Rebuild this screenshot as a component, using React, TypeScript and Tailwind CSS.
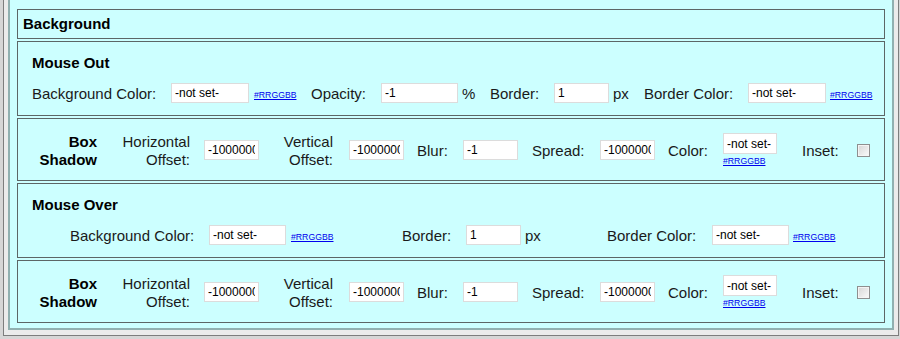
const font = "font-['Liberation_Sans',Arial,sans-serif]";

const Field = ({ value, w }: { value: string; w: string }) => (
  <input
    readOnly
    value={value}
    className={`${w} h-[20px] shrink-0 border border-[#dcdcdc] bg-white px-[3px] text-[12px] text-black outline-none ${font}`}
  />
);

const Hex = ({ pad }: { pad: string }) => (
  <span className={`${pad} mt-[4px] shrink-0 text-[8.7px] leading-none text-[#0000ee] underline`}>#RRGGBB</span>
);

const Panel = ({ children, h }: { children: React.ReactNode; h: string }) => (
  <div className={`${h} border border-[#5c6666]`}>{children}</div>
);

const ShadowRow = () => (
  <Panel h="h-[63px]">
    <div className="flex items-center pt-[12px] text-[15px] leading-[18px] text-[#1a1a1a]">
      <div className="w-[79px] shrink-0 pt-[2px] text-right font-bold text-black">
        Box
        <br />
        Shadow
      </div>
      <div className="w-[93px] shrink-0 pt-[2px] text-right">
        Horizontal
        <br />
        Offset:
      </div>
      <div className="ml-[14px]">
        <Field value="-1000000" w="w-[55px]" />
      </div>
      <div className="w-[74px] shrink-0 pt-[2px] text-right">
        Vertical
        <br />
        Offset:
      </div>
      <div className="ml-[16px]">
        <Field value="-1000000" w="w-[55px]" />
      </div>
      <span className="w-[59px] shrink-0 pl-[13px] pt-[2px]">Blur:</span>
      <Field value="-1" w="w-[55px]" />
      <span className="w-[82px] shrink-0 pl-[14px] pt-[2px]">Spread:</span>
      <Field value="-1000000" w="w-[55px]" />
      <span className="w-[68px] shrink-0 pl-[13px] pt-[2px]">Color:</span>
      <div className="flex w-[55px] shrink-0 flex-col">
        <input
          readOnly
          value="-not set-"
          className={`h-[21px] w-[54px] border border-[#dcdcdc] bg-white px-[3px] text-[12px] text-black outline-none ${font}`}
        />
        <span className="mt-[2px] text-[8.7px] leading-[11px] text-[#0000ee] underline">#RRGGBB</span>
      </div>
      <span className="w-[79px] shrink-0 pl-[24px] pt-[2px]">Inset:</span>
      <span className="h-[13px] w-[13px] shrink-0 border border-[#8e8f8f] bg-gradient-to-br from-[#d6d6d6] to-[#fafafa] shadow-[inset_0_0_0_1px_#f4f4f4]" />
    </div>
  </Panel>
);

export default function App() {
  return (
    <div className={`h-[339px] w-[900px] overflow-hidden bg-[#d6d6d6] ${font}`}>
      <div className="ml-[3px] w-[896px] border-x border-b border-[#7d7d7d] bg-[#ebebeb] px-[4px] pb-[5px]">
        <div className="flex flex-col gap-[2px] border-2 border-t-0 border-[#90b0b0] bg-[#ccffff] px-[7px] pb-[5px] pt-[9px]">
          <Panel h="h-[30px]">
            <div className="pl-[5px] pt-[5px] text-[15px] font-bold leading-[18px] text-black">Background</div>
          </Panel>

          <Panel h="h-[75px]">
            <div className="pl-[14px] pt-[12px] text-[15px] font-bold leading-[18px] text-black">Mouse Out</div>
            <div className="mt-[11px] flex h-[20px] items-center pl-[14px] text-[15px] leading-[18px] text-[#1a1a1a]">
              <span className="w-[139px] shrink-0 pt-[2px]">Background Color:</span>
              <Field value="-not set-" w="w-[78px]" />
              <div className="flex w-[62px] shrink-0">
                <Hex pad="pl-[5px]" />
              </div>
              <span className="w-[70px] shrink-0 pt-[2px]">Opacity:</span>
              <Field value="-1" w="w-[77px]" />
              <span className="w-[32px] shrink-0 pl-[4px] pt-[2px]">%</span>
              <span className="w-[64px] shrink-0 pt-[2px]">Border:</span>
              <Field value="1" w="w-[55px]" />
              <span className="w-[35px] shrink-0 pl-[4px] pt-[2px]">px</span>
              <span className="w-[104px] shrink-0 pt-[2px]">Border Color:</span>
              <Field value="-not set-" w="w-[78px]" />
              <Hex pad="pl-[4px]" />
            </div>
          </Panel>

          <ShadowRow />

          <Panel h="h-[75px]">
            <div className="pl-[14px] pt-[12px] text-[15px] font-bold leading-[18px] text-black">Mouse Over</div>
            <div className="mt-[11px] flex h-[20px] items-center pl-[52px] text-[15px] leading-[18px] text-[#1a1a1a]">
              <span className="w-[139px] shrink-0 pt-[2px]">Background Color:</span>
              <Field value="-not set-" w="w-[77px]" />
              <div className="flex w-[116px] shrink-0">
                <Hex pad="pl-[5px]" />
              </div>
              <span className="w-[64px] shrink-0 pt-[2px]">Border:</span>
              <Field value="1" w="w-[55px]" />
              <span className="w-[86px] shrink-0 pl-[4px] pt-[2px]">px</span>
              <span className="w-[105px] shrink-0 pt-[2px]">Border Color:</span>
              <Field value="-not set-" w="w-[77px]" />
              <Hex pad="pl-[4px]" />
            </div>
          </Panel>

          <ShadowRow />
        </div>
      </div>
    </div>
  );
}
